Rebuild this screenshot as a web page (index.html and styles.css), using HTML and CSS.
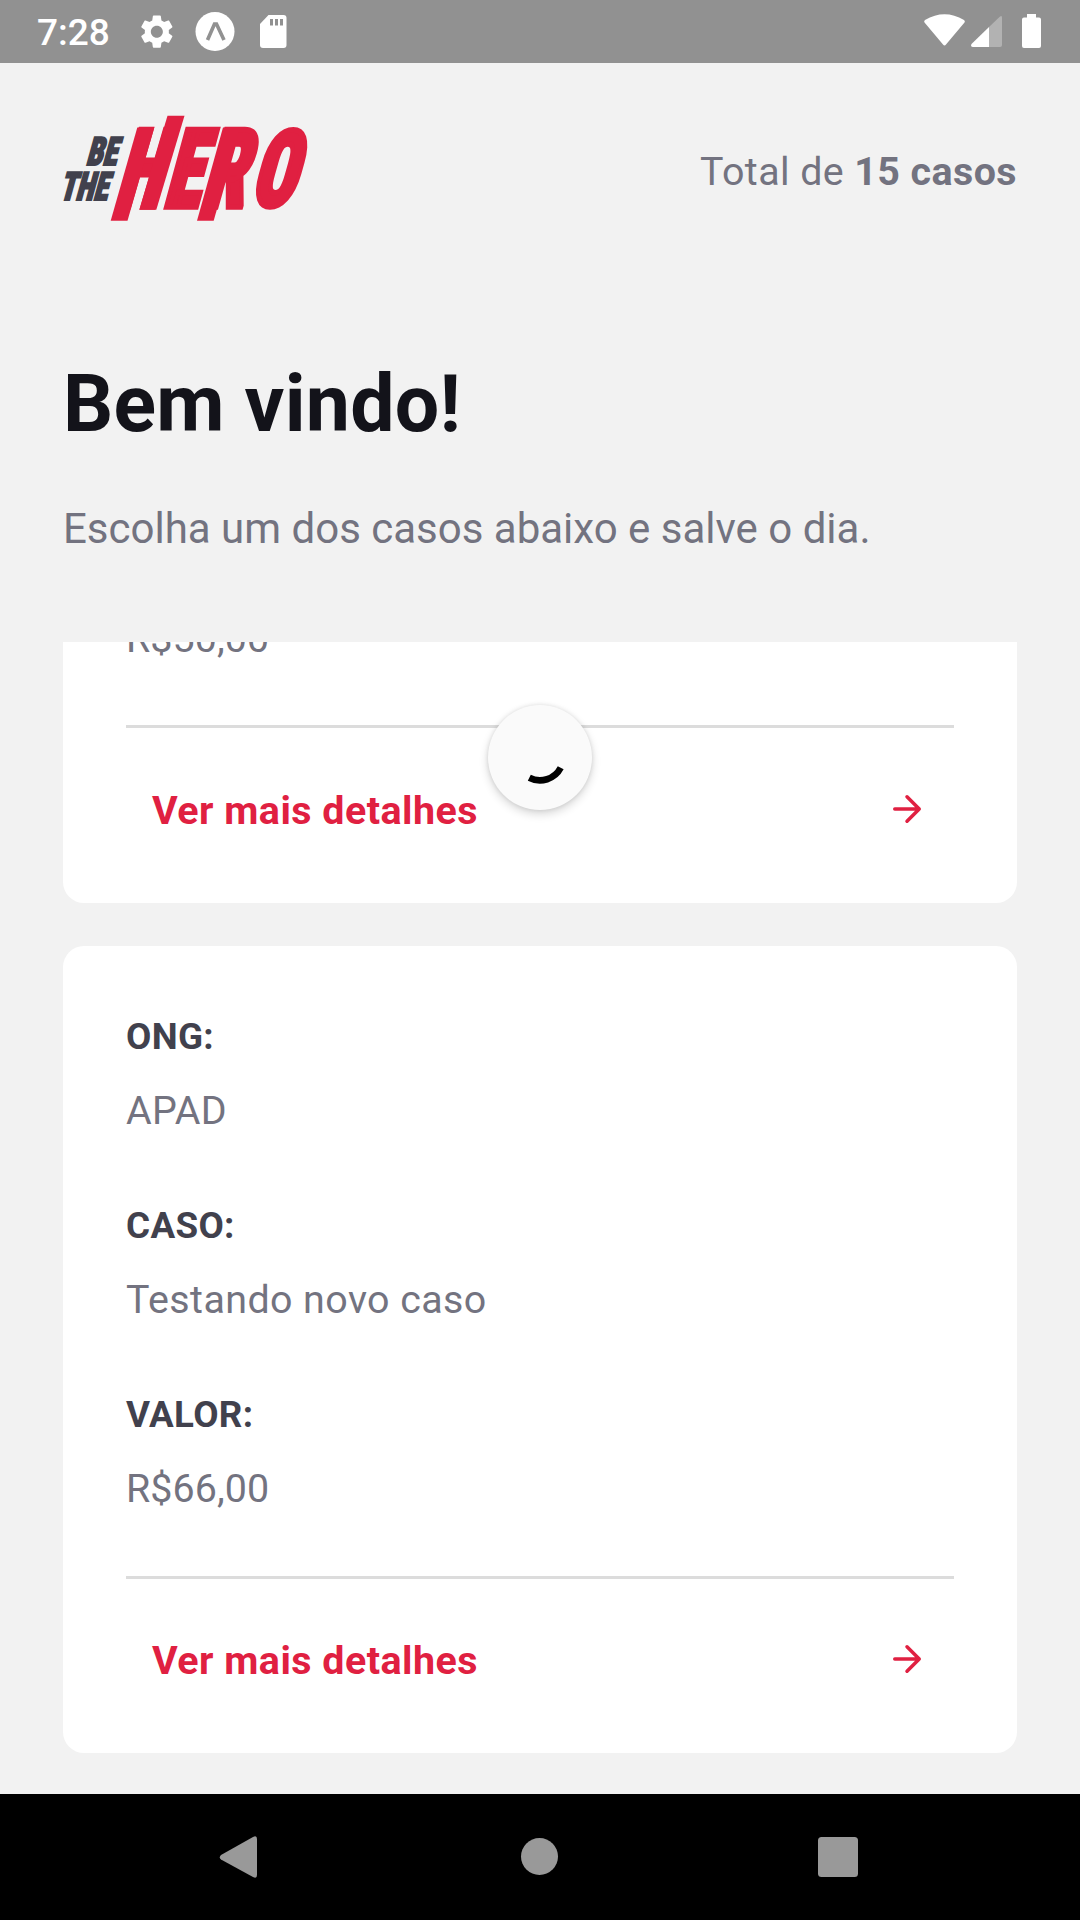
FILE: index.html
```html
<!DOCTYPE html>
<html lang="pt-BR">
<head>
<meta charset="utf-8">
<title>Be The Hero</title>
<link rel="stylesheet" href="styles.css">
</head>
<body>
<div class="screen">
  <div class="status-bar">
    <span class="clock">7:28</span>
    <svg class="status-left" width="150" height="63" viewBox="0 0 150 63">
      <path transform="translate(0.8 11.6) scale(1.67)" fill="#fff" fill-rule="evenodd" d="M19.14 12.94c.04-.3.06-.61.06-.94 0-.32-.02-.64-.07-.94l2.03-1.58c.18-.14.23-.41.12-.61l-1.92-3.32c-.12-.22-.37-.29-.59-.22l-2.39.96c-.5-.38-1.03-.7-1.62-.94l-.36-2.54c-.04-.24-.24-.41-.48-.41h-3.84c-.24 0-.43.17-.47.41l-.36 2.54c-.59.24-1.13.57-1.62.94l-2.39-.96c-.22-.08-.47 0-.59.22L2.74 8.87c-.12.21-.08.47.12.61l2.03 1.58c-.05.3-.09.63-.09.94s.02.64.07.94l-2.03 1.58c-.18.14-.23.41-.12.61l1.92 3.32c.12.22.37.29.59.22l2.39-.96c.5.38 1.03.7 1.62.94l.36 2.54c.05.24.24.41.48.41h3.84c.24 0 .44-.17.47-.41l.36-2.54c.59-.24 1.13-.56 1.62-.94l2.39.96c.22.08.47 0 .59-.22l1.92-3.32c.12-.22.07-.47-.12-.61l-2.01-1.58zM12 15.6c-1.98 0-3.6-1.62-3.6-3.6s1.62-3.6 3.6-3.6 3.6 1.62 3.6 3.6-1.62 3.6-3.6 3.6z"/>
      <circle cx="79" cy="31.5" r="19.5" fill="#fff"/>
      <path d="M71.500 40 78.500 24H80.500L88 40" fill="none" stroke="#919191" stroke-width="3.600"/>
      <path d="M132.500 15H147.500a3 3 0 0 1 3 3V45a3 3 0 0 1-3 3H127a3 3 0 0 1-3-3V24Z" fill="#fff"/>
      <path d="M134 19h3v6.500h-3zm5 0h3v6.500h-3zm5 0h3v6.500h-3z" fill="#919191"/>
    </svg>
    <svg class="status-right" width="120" height="63" viewBox="0 0 120 63" fill="#fff">
      <path d="M4.500 22.500Q3.500 21 5 20Q24.500 8.500 44 20Q45.500 21 44.500 22.500L26 44.500Q24.500 46.500 23 44.500Z"/>
      <path opacity=".3" d="M69 27 80 16.500Q82 15 82 17.500V45q0 2-2 2H69Z"/>
      <path d="M69 27V47H53q-3-.5-1.500-3Z"/>
      <path d="M107 14h9v3.500h3q2 0 2 2V46q0 2-2 2h-15q-2 0-2-2V19.500q0-2 2-2h3Z"/>
    </svg>
  </div>

  <div class="header">
    <svg class="logo" width="250" height="107" viewBox="0 0 250 107" role="img" aria-label="Be The Hero">
      <g class="logo-small">
        <text transform="translate(22.500 50) skewX(-15.400)" textLength="30.500" lengthAdjust="spacingAndGlyphs">BE</text>
        <text transform="translate(-4 85) skewX(-15.400)" textLength="48" lengthAdjust="spacingAndGlyphs">THE</text>
      </g>
      <g class="logo-large">
        <text transform="translate(51 92.200) skewX(-16.200) scale(.655 1)">H</text>
        <text transform="translate(99.200 92.200) skewX(-15.200) scale(.68 1)">E</text>
        <text transform="translate(137.600 92.200) skewX(-15.600) scale(.69 1)">R</text>
        <text transform="translate(186 91.200) skewX(-15.800) scale(.67 .97)">O</text>
        <path d="M74.300 12.400H91.300L64.500 105.700H47.700Z"/>
        <path d="M104.500 .8H121.500L93.300 94.700H76.300Z"/>
        <path d="M160 12.400H177L150.700 105.700H134Z"/>
      </g>
    </svg>
    <p class="total">Total de <strong>15 casos</strong></p>
  </div>

  <h1 class="title">Bem vindo!</h1>
  <p class="description">Escolha um dos casos abaixo e salve o dia.</p>

  <div class="list">
    <div class="card card-scrolled">
      <p class="value amount">R$50,00</p>
      <div class="details">
        <span>Ver mais detalhes</span>
        <svg class="arrow" width="42" height="42" viewBox="0 0 24 24"><path d="M5 12h14M12 5l7 7-7 7"/></svg>
      </div>
    </div>
    <div class="card">
      <dl class="fields">
        <div class="field"><dt class="label">ONG:</dt><dd class="value">APAD</dd></div>
        <div class="field"><dt class="label">CASO:</dt><dd class="value">Testando novo caso</dd></div>
        <div class="field"><dt class="label">VALOR:</dt><dd class="value amount">R$66,00</dd></div>
      </dl>
      <div class="details">
        <span>Ver mais detalhes</span>
        <svg class="arrow" width="42" height="42" viewBox="0 0 24 24"><path d="M5 12h14M12 5l7 7-7 7"/></svg>
      </div>
    </div>
    <div class="spinner">
      <svg width="104" height="105" viewBox="0 0 104 105"><path d="M41.300 72.800A23.400 23.400 0 0 0 72.700 62.800" fill="none" stroke="#000" stroke-width="6.600"/></svg>
    </div>
  </div>

  <div class="nav-bar">
    <svg width="1080" height="126" viewBox="0 0 1080 126" fill="#999">
      <path d="M221 61 253 43Q257 41 257 45V81Q257 85 253 83L221 65.500Q218.500 63.500 221 61Z"/>
      <circle cx="539.500" cy="62.500" r="18.500"/>
      <rect x="818" y="43" width="40" height="40" rx="3.500"/>
    </svg>
  </div>
</div>
</body>
</html>
```
FILE: styles.css
```css
* { box-sizing: border-box; margin: 0; padding: 0; }

body {
  background: #f2f2f2;
  font-family: Roboto, "Liberation Sans", sans-serif;
}

.screen {
  width: 1080px;
  height: 1920px;
  display: flex;
  flex-direction: column;
  background: #f2f2f2;
  overflow: hidden;
}

.status-bar {
  height: 63px;
  flex: none;
  display: flex;
  align-items: center;
  background: #919191;
  padding: 0 40px 0 37px;
}

.clock {
  width: 99px;
  color: #fff;
  font-size: 37px;
  font-weight: 500;
  line-height: 63px;
  padding-top: 2px;
}

.status-left, .status-right { display: block; overflow: visible; }
.status-right { margin-left: auto; }

.header {
  display: flex;
  justify-content: space-between;
  align-items: center;
  padding: 0 63px;
  margin-top: 52px;
  height: 107px;
}

.logo { display: block; overflow: visible; font-weight: 900; font-stretch: 75%; }
.logo-small {
  fill: #41414d;
  stroke: #41414d;
  stroke-width: 2;
  font-size: 39px;
}
.logo-large { fill: #e02041; font-size: 109px; }
.logo-large text { stroke: #e02041; stroke-width: 5; vector-effect: non-scaling-stroke; }

.total {
  font-size: 39.4px;
  line-height: 46px;
  letter-spacing: .42px;
  color: #737380;
  padding-top: 6px;
}

.title {
  font-size: 78.75px;
  line-height: 92px;
  letter-spacing: .25px;
  color: #13131a;
  margin: 136px 63px 0;
}

.description {
  font-size: 42px;
  line-height: 50px;
  color: #737380;
  margin: 54px 63px 0;
}

.list {
  position: relative;
  flex: 1;
  min-height: 0;
  margin-top: 88px;
  padding: 0 63px;
  overflow: hidden;
  display: flex;
  flex-direction: column;
  gap: 43px;
}

.card {
  flex: none;
  height: 807px;
  padding: 69px 63px 0;
  border-radius: 21px;
  background: #fff;
}

.card-scrolled {
  height: 261px;
  padding-top: 0;
  border-radius: 0 0 21px 21px;
}
.card-scrolled .value { margin: -26px 0 63px; }
.card-scrolled .details { padding-top: 60px; }

.fields {
  display: flex;
  flex-direction: column;
  gap: 70px;
  margin-bottom: 64px;
}

.field { display: flex; flex-direction: column; gap: 30px; }

.label {
  font-size: 36.75px;
  line-height: 43px;
  letter-spacing: .35px;
  font-weight: 700;
  color: #41414d;
}

.value {
  font-size: 39.4px;
  line-height: 46px;
  letter-spacing: .42px;
  color: #737380;
}

.amount { letter-spacing: .05px; }

.details {
  display: flex;
  justify-content: space-between;
  align-items: flex-start;
  border-top: 3px solid #dcdcdc;
  padding: 59px 26px 0;
  color: #e02041;
  font-size: 39.4px;
  font-weight: 700;
  line-height: 46px;
  letter-spacing: .47px;
}

.arrow { fill: none; stroke: #e02041; stroke-width: 2; stroke-linecap: round; stroke-linejoin: round; }

.spinner {
  position: absolute;
  left: 488px;
  top: 63px;
  width: 104px;
  height: 105px;
  border-radius: 50%;
  background: #fafafa;
  box-shadow: 0 4px 10px rgba(0, 0, 0, .16), 0 0 4px rgba(0, 0, 0, .1);
}

.spinner svg { display: block; }

.nav-bar { height: 126px; flex: none; background: #000; }
.nav-bar svg { display: block; }
```
